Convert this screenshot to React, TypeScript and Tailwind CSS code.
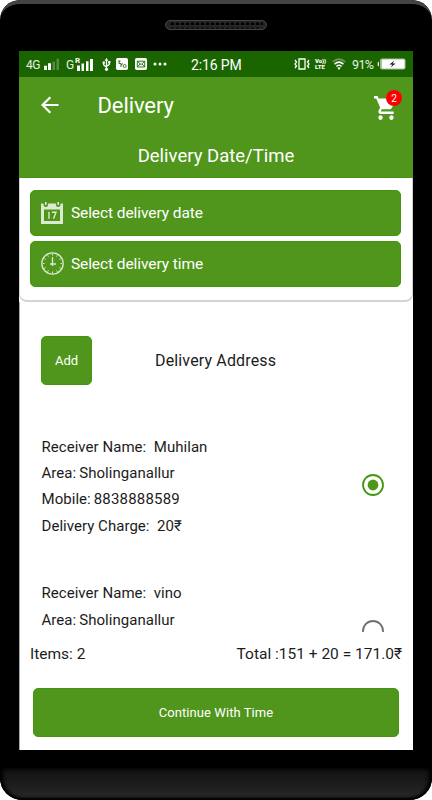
// App.tsx

import React, { useState } from "react";

type Address = {
  id: number;
  name: string;
  area: string;
  mobile?: string;
  charge?: number;
};

const ADDRESSES: Address[] = [
  { id: 1, name: "Muhilan", area: "Sholinganallur", mobile: "8838888589", charge: 20 },
  { id: 2, name: "vino", area: "Sholinganallur" },
];

const ITEMS = 2;
const SUBTOTAL = 151;

const StatusBar = () => (
  <div className="flex h-[26px] shrink-0 items-center bg-[#1a6500] pl-[7px] pr-[7px] text-white">
    <span className="w-[17px] pt-px text-[12px] tracking-[-0.4px] whitespace-nowrap text-white/90">4G</span>
    <svg className="h-[12px] w-[17px] shrink-0" viewBox="0 0 17 14" preserveAspectRatio="none" fill="#fff">
      <path d="M1 9h3v5H1zM5 6h3v8H5z" />
      <path d="M9.500 4h2.500v10H9.500zM13.500 1h2.500v13h-2.500z" opacity=".25" />
    </svg>
    <span className="ml-[6px] w-[9px] pt-px text-[12px] text-white/90">G</span>
    <div className="flex h-[14px] w-[19px] shrink-0 flex-col">
      <span className="h-[7px] text-[8px] leading-[7px] font-bold">R</span>
      <svg className="-mt-[6px] h-[13px] w-[19px] shrink-0" viewBox="0 0 19 14" preserveAspectRatio="none" fill="#fff">
        <path d="M2 8h3v6H2zM6.500 6h2.500v8H6.500zM11 3.500h2.500V14H11zM15 1h3v13h-3z" />
      </svg>
    </div>
    <svg className="ml-[8px] h-[13px] w-[9px] shrink-0" viewBox="0 0 9 14" fill="none" stroke="#fff" strokeWidth="1.400">
      <path d="M4.500 2v10M1.500 5v2.500L4.500 10M7.500 4.500v2.500L4.500 9" />
      <path d="M4.500 0 6.500 3H2.500z" fill="#fff" stroke="none" />
      <circle cx="4.500" cy="12.200" r="1.700" fill="#fff" stroke="none" />
      <path d="M.300 3.800h2.400v2.400H.300zM6.300 3.300h2.400v2.400H6.300z" fill="#fff" stroke="none" />
    </svg>
    <svg className="ml-[5px] h-3 w-3 shrink-0" viewBox="0 0 12 12" fill="none">
      <rect width="12" height="12" rx="1.800" fill="#fff" />
      <path d="M3 2v3.500h2V9M3 4l1.500-1M5 7l2-1.500" stroke="#1a6500" strokeWidth=".9" />
      <circle cx="8.700" cy="8" r="1.500" stroke="#1a6500" strokeWidth=".8" />
    </svg>
    <svg className="ml-[7px] h-3 w-3 shrink-0" viewBox="0 0 12 12" fill="none">
      <rect width="12" height="12" rx="1.800" fill="#fff" />
      <path d="M2.300 3.200h7.400v5.800H2.300zM2.500 3.500 6 6.500l3.500-3M2.500 8.800 5 6M9.500 8.800 7 6" stroke="#1a6500" strokeWidth=".9" />
    </svg>
    <svg className="ml-[5.500px] h-1 w-[14px] shrink-0" viewBox="0 0 14 4" fill="#fff">
      <circle cx="2" cy="2" r="1.500" />
      <circle cx="7" cy="2" r="1.500" />
      <circle cx="12" cy="2" r="1.500" />
    </svg>
    <span className="ml-[24.500px] pt-[2px] text-[14px] tracking-[-0.15px] whitespace-nowrap">2:16 PM</span>
    <div className="ml-auto flex items-center">
      <svg className="h-3 w-4 shrink-0" viewBox="0 0 16 12" fill="none" stroke="#fff" strokeWidth="1.300">
        <path d="M5 1h6v10H5zM1 2l1.500 2L1 6l1.500 2L1 10M15 2l-1.500 2L15 6l-1.500 2 1.500 2" />
      </svg>
      <div className="ml-[5px] flex w-[13px] flex-col text-[6px] leading-[6.500px] font-black">
        <span className="tracking-[-0.1px]">Vo))</span>
        <span>LTE</span>
      </div>
      <svg className="ml-[4px] h-[12px] w-[14px] shrink-0" viewBox="0 0 14 11" preserveAspectRatio="none" fill="none" stroke="#fff" strokeWidth="1.400">
        <path d="M.700 3.500Q7-1.500 13.300 3.500" opacity=".35" />
        <path d="M2.500 5.600Q7 2 11.500 5.600M4.400 7.700Q7 5.700 9.600 7.700" />
        <path d="M5.300 9Q7 7.900 8.700 9L7 11z" fill="#fff" stroke="none" />
      </svg>
      <span className="ml-[6px] w-[24px] pt-[2px] text-[12.500px] tracking-[-0.6px] text-white/90">91%</span>
      <svg className="ml-[1px] h-3 w-[29px] shrink-0" viewBox="0 0 29 12">
        <path d="M2 3.500Q.500 3.500.500 6T2 8.500z" fill="#fff" opacity=".85" />
        <rect x="3" y=".500" width="25.500" height="11" rx="2" fill="#fff" opacity=".6" />
        <rect x="5" y="1.500" width="22.500" height="9" rx="1" fill="#fff" />
        <path d="m17.500 2.500-5 4h3l-2 3 5-4h-3z" fill="#111" />
      </svg>
    </div>
  </div>
);

const CalendarIcon = () => (
  <svg className="h-[22px] w-[22px]" viewBox="0 0 22 22" fill="none">
    <path d="M0 1.500h2.500v1.200a2.300 2.300 0 0 0 4.600 0V1.500h7.800v1.200a2.300 2.300 0 0 0 4.600 0V1.500H22V22H0z" fill="#fff" fillOpacity=".8" />
    <path d="M3 7.500h16v11.500H3z" fill="#50961c" />
    <path d="M4.800 0v3M17.200 0v3" stroke="#fff" strokeOpacity=".8" strokeWidth="1.600" />
    <path d="M8 9.800v7M11 10.300h4l-2.500 6.500" stroke="#fff" strokeOpacity=".8" strokeWidth="1.400" />
  </svg>
);

const ClockIcon = () => (
  <svg className="h-[23px] w-[23px]" viewBox="0 0 23 23" fill="none" stroke="#fff" strokeOpacity=".8">
    <circle cx="11.500" cy="11.500" r="10.700" strokeWidth="1.300" />
    <path d="M11.500 5v7H15M9 12h2.500v2" strokeWidth="1.300" />
    <path
      d="M11.500 2v1.500M11.500 19.500V21M2 11.500h1.500M19.500 11.500H21M6.700 3.300l.700 1.300M16.300 3.300l-.7 1.300M3.300 6.700l1.300.700M19.700 6.700l-1.300.7M3.300 16.300l1.300-.7M19.700 16.300l-1.300-.7M6.700 19.700l.7-1.300M16.300 19.700l-.7-1.300"
      strokeWidth="1"
    />
  </svg>
);

const Radio = ({ checked }: { checked: boolean }) => (
  <svg className="h-[22px] w-[22px]" viewBox="0 0 22 22" fill="none">
    <circle cx="11" cy="11" r="10" stroke={checked ? "#45960e" : "#707070"} strokeWidth="1.800" />
    {checked && <circle cx="11" cy="11" r="5.400" fill="#50961c" />}
  </svg>
);

const App = () => {
  const [selected, setSelected] = useState(ADDRESSES[0].id);
  const charge = ADDRESSES.find(a => a.id === selected)?.charge ?? 0;

  return (
    <div className="bg-white font-[Roboto,sans-serif]">
      <div className="flex h-[800px] w-[432px] flex-col overflow-hidden rounded-t-[20px] rounded-b-[22px] bg-black">
        {/* Speaker */}
        <div className="flex h-[51px] shrink-0 justify-center rounded-t-[20px] border-t-4 border-[#444] pt-4">
          <svg className="h-[10px] w-[102px]" viewBox="0 0 102 10">
            <defs>
              <pattern id="grille" width="5" height="5" patternUnits="userSpaceOnUse">
                <circle cx="2.500" cy="4" r="1.800" fill="#000" />
              </pattern>
            </defs>
            <rect x=".500" y=".500" width="101" height="9" rx="4.500" fill="#262626" stroke="#444" />
            <rect x="4" y="1" width="94" height="7.500" rx="3" fill="url(#grille)" />
          </svg>
        </div>

        {/* Screen */}
        <div className="ml-[19px] flex h-[699px] w-[394px] shrink-0 flex-col overflow-hidden bg-white text-[#1c1c1c]">
          <StatusBar />

          <header className="h-[101px] shrink-0 border-b border-[#45960e] bg-[#50961c] text-white">
            <div className="flex h-[56px] items-center pl-[22px]">
              <button aria-label="Back">
                <svg className="h-[18px] w-[18px]" viewBox="0 0 18 18" fill="none" stroke="#fff" strokeWidth="2.200">
                  <path d="M17.500 9H2M9.300 1.200 1.500 9l7.800 7.800" />
                </svg>
              </button>
              <h1 className="ml-[38.500px] pt-px text-[22px] tracking-[-0.1px]">Delivery</h1>
              <div className="relative ml-auto mr-[15px] mt-[6px] h-[24px] w-[24px]">
                <svg className="h-[24px] w-[24px]" viewBox="1 2 22 20" preserveAspectRatio="none" fill="#fff">
                  <path d="M7 18c-1.100 0-1.990.9-1.990 2S5.900 22 7 22s2-.9 2-2-.9-2-2-2zM1 2v2h2l3.600 7.590-1.350 2.450c-.16.28-.25.610-.25.960 0 1.100.9 2 2 2h12v-2H7.420c-.14 0-.25-.11-.25-.25l.03-.12.900-1.630h7.450c.75 0 1.410-.41 1.750-1.030l3.580-6.490c.08-.14.120-.31.120-.48 0-.55-.45-1-1-1H5.210l-.94-2H1zm16 16c-1.100 0-1.990.9-1.990 2s.89 2 1.990 2 2-.9 2-2-.9-2-2-2z" />
                </svg>
                <span className="absolute -top-[6px] left-[12px] flex h-4 w-4 items-center justify-center rounded-full bg-[#fc0000] pt-px text-[10px]">
                  {ITEMS}
                </span>
              </div>
            </div>
            <h2 className="mt-[10px] text-center text-[18.500px]">Delivery Date/Time</h2>
          </header>

          <div className="flex h-[124px] shrink-0 flex-col gap-[5px] rounded-b-lg border-x border-b-2 border-[#d4d4d4] px-[10.400px] pt-[11.500px] text-[15.500px] tracking-[-0.08px] text-white">
            <button className="flex h-[46px] w-[371px] shrink-0 items-center rounded-[5px] border border-[#45960e] bg-[#50961c] pl-[10px]">
              <CalendarIcon />
              <span className="ml-[7.500px] pt-[2px]">Select delivery date</span>
            </button>
            <button className="flex h-[46px] w-[371px] shrink-0 items-center rounded-[5px] border border-[#45960e] bg-[#50961c] pl-[10px]">
              <ClockIcon />
              <span className="ml-[6.500px] pt-[2px]">Select delivery time</span>
            </button>
          </div>

          <div className="flex h-[83px] shrink-0 items-end border-l border-[#aaa] pl-[21px]">
            <button className="h-[49px] w-[51px] rounded-[5px] border border-[#45960e] bg-[#50961c] text-[13px] text-white">
              Add
            </button>
            <h3 className="ml-[63px] flex h-[49px] items-center pt-px text-[16px] tracking-[0.15px]">Delivery Address</h3>
          </div>

          {/* Address list */}
          <div className="h-[247px] shrink-0 overflow-hidden border-l border-[#aaa] pt-[49px] pl-[21.500px]">
            {ADDRESSES.map(a => (
              <div key={a.id} className="flex h-[146.300px] text-[15px] leading-[26.200px] tracking-[0.04px] whitespace-pre">
                <div className="w-[320.500px]">
                  <p>Receiver Name:  {a.name}</p>
                  <p>Area:<span className="ml-[3px]">{a.area}</span></p>
                  {a.mobile && <p>Mobile:<span className="ml-[3px] tracking-[0.18px]">{a.mobile}</span></p>}
                  {a.charge && <p>Delivery Charge:  {a.charge}₹</p>}
                </div>
                <button className="mt-[40px] h-[22px] w-[22px]" onClick={() => setSelected(a.id)} aria-label={a.name}>
                  <Radio checked={a.id === selected} />
                </button>
              </div>
            ))}
          </div>

          <div className="flex h-[55px] shrink-0 justify-between border-l border-[#aaa] pt-[10px] pr-[11px] pl-[10px] text-[15.500px] leading-6">
            <span>Items: {ITEMS}</span>
            <span>
              Total :{SUBTOTAL} + {charge} = {(SUBTOTAL + charge).toFixed(1)}₹
            </span>
          </div>
          <div className="grow border-l border-[#aaa] pl-[13px]">
            <button className="mt-[0.500px] h-[49px] w-[366px] rounded-[5px] border border-[#45960e] bg-[#50961c] pt-px text-[13px] tracking-[0.08px] text-white">
              Continue With Time
            </button>
          </div>
        </div>

        <div className="mt-[18px] h-8 shrink-0 rounded-b-[22px] bg-linear-to-b from-[#111] to-[#292929] shadow-[inset_0_-2px_2px_#000,inset_3px_0_4px_#000,inset_-3px_0_4px_#000]" />
      </div>
    </div>
  );
};

export default App;
